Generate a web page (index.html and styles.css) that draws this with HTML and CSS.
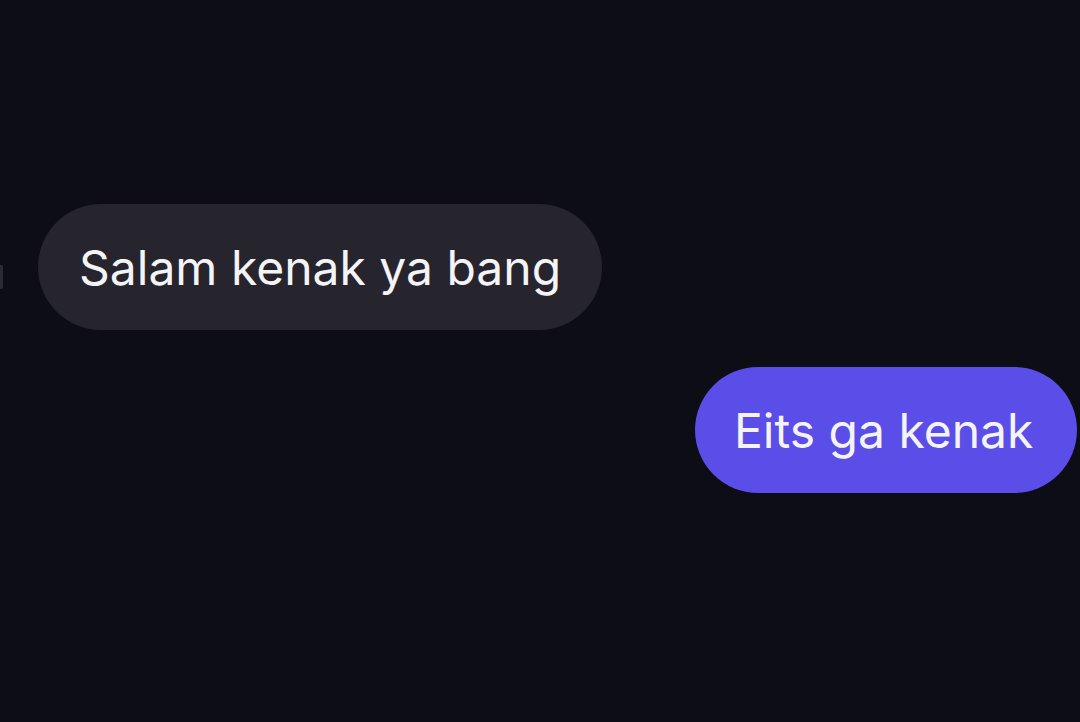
FILE: index.html
```html
<!DOCTYPE html>
<html>
<head>
<meta charset="utf-8">
<link rel="stylesheet" href="styles.css">
</head>
<body>
<div class="chat">
  <div class="row row-in">
    <span class="edge"></span>
    <div class="bubble in">Salam kenak ya bang</div>
  </div>
  <div class="row row-out">
    <div class="bubble out">Eits ga kenak</div>
  </div>
</div>
</body>
</html>
```
FILE: styles.css
```css
html, body {
  margin: 0;
  padding: 0;
  background: #0d0d16;
  width: 1080px;
  height: 722px;
  overflow: hidden;
}
.chat {
  display: flex;
  flex-direction: column;
  padding-top: 204px;
  font-family: Inter, "Noto Sans", sans-serif;
}
.row {
  display: flex;
  align-items: center;
}
.row-out {
  justify-content: flex-end;
  margin-top: 37px;
  padding-right: 3px;
}
.edge {
  width: 3px;
  height: 24px;
  margin-right: 35px;
  margin-top: 20px;
  background: #2a2a36;
  border-radius: 0 2px 2px 0;
}
.bubble {
  height: 126px;
  border-radius: 63px;
  display: flex;
  align-items: center;
  color: #f4f4f6;
  font-size: 48px;
  box-sizing: border-box;
}
.in {
  background: #26252d;
  width: 564px;
  padding-left: 41px;
}
.out {
  background: #5b4ee8;
  width: 382px;
  padding-left: 39px;
}
```
